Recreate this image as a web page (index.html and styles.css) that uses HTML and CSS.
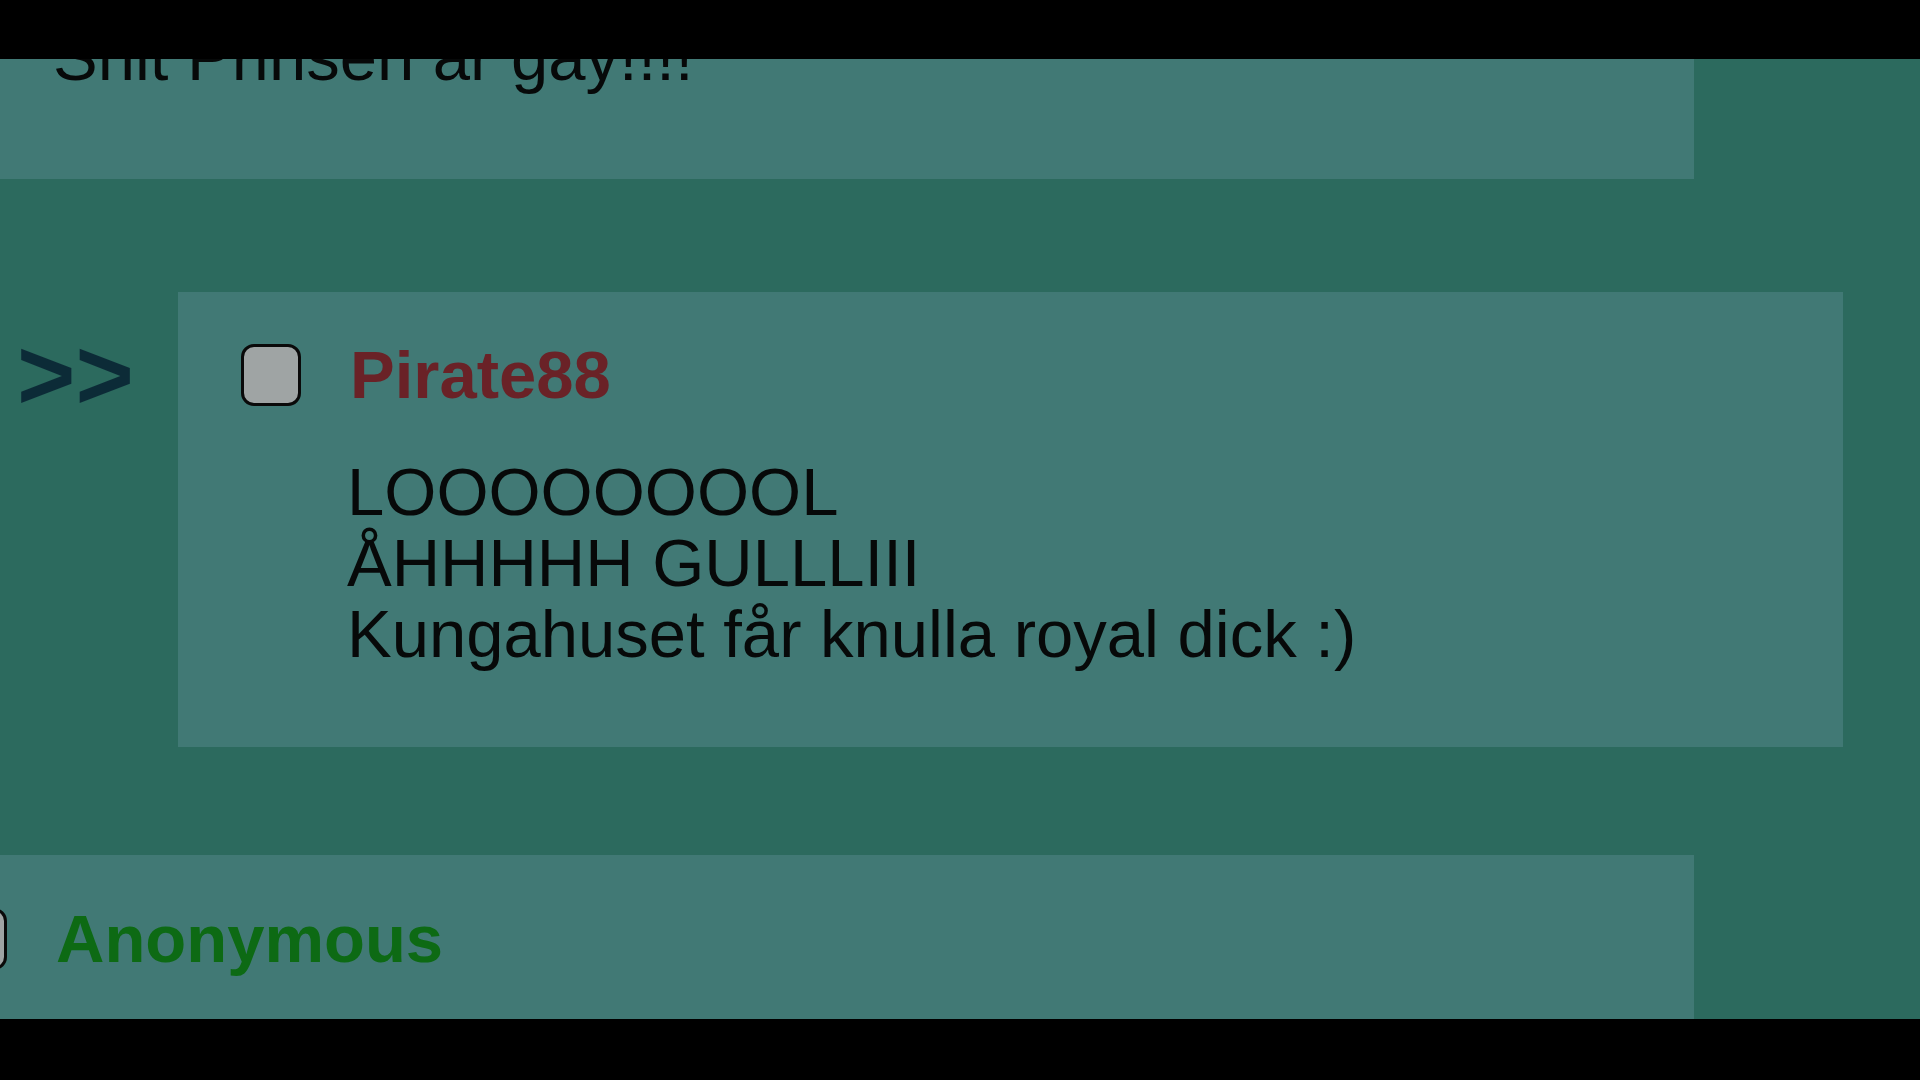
FILE: index.html
```html
<!DOCTYPE html>
<html lang="sv">
<head>
<meta charset="utf-8">
<title>Tråd</title>
<link rel="stylesheet" href="styles.css">
</head>
<body>
<div class="screen">
  <div class="post op">
    <div class="message">Shit Prinsen är gay!!!!</div>
  </div>

  <div class="reply-row">
    <div class="arrows">&gt;&gt;</div>
    <div class="post reply">
      <div class="post-header">
        <span class="check"></span>
        <span class="name name-red">Pirate88</span>
      </div>
      <div class="message body">LOOOOOOOOL<br>ÅHHHHH GULLLIII<br>Kungahuset får knulla royal dick :)</div>
    </div>
  </div>

  <div class="post op next">
    <div class="post-header">
      <span class="check"></span>
      <span class="name name-green">Anonymous</span>
    </div>
  </div>
</div>
</body>
</html>
```

FILE: styles.css
```css
* { box-sizing: border-box; }

html, body {
  margin: 0;
  padding: 0;
  background: #000;
}

body {
  font-family: "Liberation Sans", Arial, sans-serif;
  font-size: 67px;
  line-height: 71px;
  color: #070909;
}

.screen {
  margin-top: 59px;
  height: 960px;
  overflow: hidden;
  background: #2c6a5e;
}

.post {
  background: #417975;
}

.op {
  width: 1810px;
  margin-left: -116px;
  padding-left: 63px;
}

.op:first-child {
  margin-top: -78px;
  padding-top: 40px;
  padding-bottom: 87px;
}

.op:first-child .message {
  padding-left: 106px;
}

.op.next {
  margin-top: 108px;
  padding-top: 48px;
  padding-bottom: 200px;
}

.reply-row {
  display: flex;
  align-items: flex-start;
  margin-top: 113px;
}

.arrows {
  width: 178px;
  flex: none;
  padding-top: 47px;
  padding-left: 17px;
  font-size: 100px;
  line-height: 71px;
  font-weight: bold;
  color: #0c2b37;
}

.reply {
  width: 1665px;
  padding: 47px 0 78px 63px;
}

.post-header {
  display: flex;
  align-items: center;
  height: 71px;
}

.check {
  width: 60px;
  height: 62px;
  flex: none;
  border: 3px solid #0a0a0a;
  border-radius: 13px;
  background: #9fa4a4;
  margin-right: 49px;
}

.name {
  font-weight: bold;
}

.name-red { color: #6a2227; }
.name-green { color: #0d6a14; }

.body {
  margin-top: 46px;
  padding-left: 106px;
}
```
